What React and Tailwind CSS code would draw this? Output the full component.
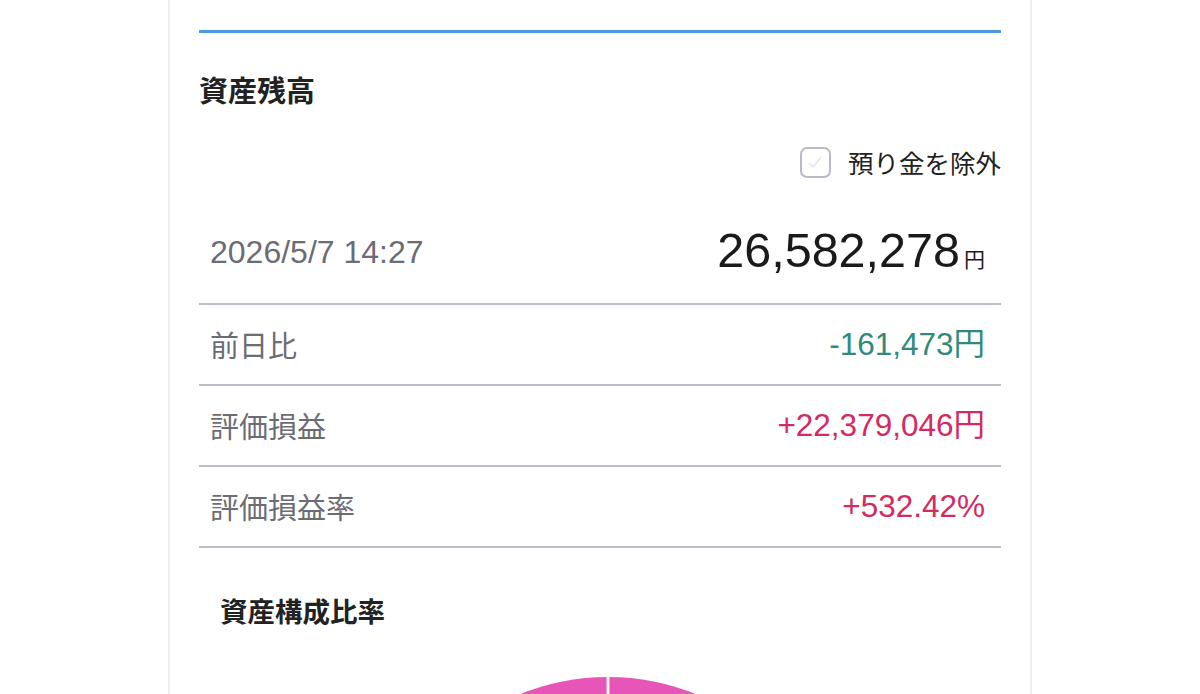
import React from "react";

const rows = [
  { label: "前日比", value: "-161,473円", color: "text-[#2f8a7c]" },
  { label: "評価損益", value: "+22,379,046円", color: "text-[#d42a5f]" },
  { label: "評価損益率", value: "+532.42%", color: "text-[#d42a5f]" },
];

export default function App() {
  return (
    <div className="min-h-[694px] bg-white font-['Liberation_Sans','Noto_Sans_CJK_JP',sans-serif]">
      <div className="mx-auto w-[864px] border-x-2 border-[#efefef] px-[29px] pt-[30px] pb-10">
        <div className="h-[3px] bg-[#4a9be4]" />
        <h2 className="mt-[36px] text-[29px] leading-[40px] font-bold text-[#222] font-['Noto_Sans_CJK_JP',sans-serif]">
          資産残高
        </h2>
        <div className="mt-[37px] flex items-center justify-end gap-[17px]">
          <div className="flex h-[31px] w-[31px] items-center justify-center rounded-[7px] border-2 border-[#b9b9cb] bg-white">
            <svg width="18" height="18" viewBox="0 0 18 18">
              <path d="M3 10 L7 14 L15 4" fill="none" stroke="#e8e8ee" strokeWidth="2" />
            </svg>
          </div>
          <span className="text-[25.5px] leading-[32px] text-[#222] font-['Noto_Sans_CJK_JP',sans-serif]">
            預り金を除外
          </span>
        </div>
        <div className="mt-[20px] flex h-[107px] items-center justify-between border-b-2 border-[#bdbdc8] pl-[11px] pr-[16px]">
          <span className="mt-[3px] text-[32px] text-[#6c6c74]">2026/5/7 14:27</span>
          <span className="flex items-baseline text-[#1a1a1a]">
            <span className="text-[48.5px] leading-none">26,582,278</span>
            <span className="ml-[4px] text-[21px] leading-none font-['Noto_Sans_CJK_JP',sans-serif]">円</span>
          </span>
        </div>
        {rows.map((r) => (
          <div
            key={r.label}
            className="flex h-[81px] items-center justify-between border-b-2 border-[#bdbdc8] pl-[11px] pr-[16px]"
          >
            <span className="text-[29px] text-[#6c6c74] font-['Noto_Sans_CJK_JP',sans-serif]">{r.label}</span>
            <span className={`text-[31.5px] ${r.color}`}>{r.value}</span>
          </div>
        ))}
        <h3 className="mt-[42px] pl-[21px] text-[27.5px] leading-[40px] font-bold text-[#222] font-['Noto_Sans_CJK_JP',sans-serif]">
          資産構成比率
        </h3>
        <div className="mt-[46px] flex justify-center">
          <svg width="470" height="470" viewBox="0 0 470 470" className="ml-[16px]">
            <circle cx="235" cy="235" r="234" fill="#e655b7" />
            <line x1="235" y1="0" x2="235" y2="235" stroke="#fbf3e6" strokeWidth="3" />
          </svg>
        </div>
      </div>
    </div>
  );
}
